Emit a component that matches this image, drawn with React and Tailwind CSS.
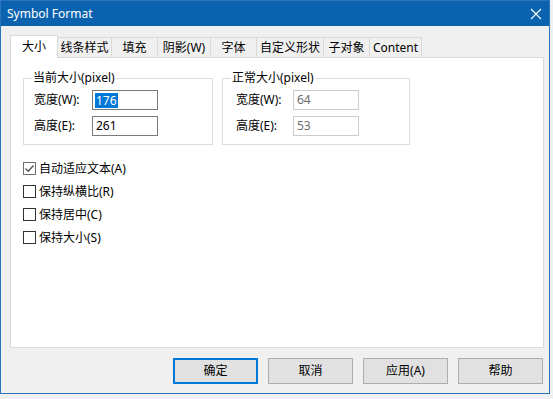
const font = { fontFamily: '"Noto Sans", "Noto Sans CJK SC", sans-serif' }

const tabs = [
  { label: '大小', w: 'w-[48px]', active: true },
  { label: '线条样式', w: 'w-[54px]' },
  { label: '填充', w: 'w-[46px]' },
  { label: '阴影(W)', w: 'w-[53px]' },
  { label: '字体', w: 'w-[46px]' },
  { label: '自定义形状', w: 'w-[67px]' },
  { label: '子对象', w: 'w-[46px]' },
  { label: 'Content', w: 'w-[52px]' },
]

function Tab({ tab }) {
  if (tab.active) {
    return (
      <div
        className={`relative z-10 -mb-px flex h-[23px] ${tab.w} items-center justify-center border border-b-0 border-[#d9d9d9] bg-white text-[12px] text-black`}
      >
        {tab.label}
      </div>
    )
  }
  return (
    <div
      className={`flex h-[20px] ${tab.w} items-center justify-center border-t border-r border-[#d9d9d9] bg-[#f0f0f0] text-[12px] text-black`}
    >
      {tab.label}
    </div>
  )
}

function Field({ label, value, disabled, selected, labelW }) {
  return (
    <div className="flex h-[20px] items-center">
      <span className={`${labelW} text-[12px] text-black`}>{label}</span>
      <div
        className={`flex h-[20px] w-[66px] items-center border bg-white pl-[2px] text-[12px] ${
          disabled ? 'border-[#cccccc] text-[#6d6d6d]' : 'border-[#7a7a7a] text-black'
        }`}
      >
        {selected ? (
          <span className="bg-[#0078d7] px-px leading-[15px] text-white">{value}</span>
        ) : (
          <span className="px-px">{value}</span>
        )}
      </div>
    </div>
  )
}

function Group({ title, className, labelW, children }) {
  return (
    <div className={`relative h-[67px] border border-[#dcdcdc] ${className}`}>
      <span className="absolute -top-[9px] left-[8px] bg-white px-px text-[12px] leading-[16px] text-black">
        {title}
      </span>
      <div className="flex flex-col gap-[6px] pt-[11px]">{children}</div>
    </div>
  )
}

function Check({ label, checked }) {
  return (
    <div className="flex h-[23px] items-center gap-[3px]">
      <div
        className={`flex h-[13px] w-[13px] items-center justify-center border bg-white ${
          checked ? 'border-[#6f6f6f]' : 'border-[#333333]'
        }`}
      >
        {checked && (
          <svg width="11" height="11" viewBox="0 0 11 11">
            <path d="M1.5 5.5 L4.2 8.2 L9.5 2.5" fill="none" stroke="#505050" strokeWidth="1.3" />
          </svg>
        )}
      </div>
      <span className="text-[12px] text-black">{label}</span>
    </div>
  )
}

function Button({ label, primary }) {
  return (
    <div
      className={`flex h-[26px] w-[85px] items-center justify-center bg-[#e1e1e1] text-[12px] text-black ${
        primary ? 'border-2 border-[#0078d7]' : 'border border-[#adadad]'
      }`}
    >
      {label}
    </div>
  )
}

export default function App() {
  return (
    <div className="h-[399px] w-[553px] overflow-hidden bg-[#eef0f2]" style={font}>
      <div className="flex h-[394px] w-[550px] flex-col border border-[#2a74ba] bg-[#f0f0f0]">
        <div className="flex h-[25px] items-center justify-between bg-[#0b63b0] pl-[6px] pr-[7px]">
          <span className="text-[12px] text-white">Symbol Format</span>
          <svg width="12" height="12" viewBox="0 0 12 12">
            <path d="M1 1 L11 11 M11 1 L1 11" stroke="white" strokeWidth="1.1" />
          </svg>
        </div>

        <div className="pl-[9px] pt-[9px]">
          <div className="flex h-[22px] items-end">
            {tabs.map((t) => (
              <Tab key={t.label} tab={t} />
            ))}
          </div>

          <div className="h-[291px] w-[534px] border border-[#d9d9d9] bg-white">
            <div className="ml-[12px] mt-[20px] flex">
              <Group title="当前大小(pixel)" className="w-[190px] pl-[10px]">
                <Field label="宽度(W):" value="176" selected labelW="w-[58px]" />
                <Field label="高度(E):" value="261" labelW="w-[58px]" />
              </Group>
              <Group title="正常大小(pixel)" className="ml-[9px] w-[188px] pl-[13px]">
                <Field label="宽度(W):" value="64" disabled labelW="w-[57px]" />
                <Field label="高度(E):" value="53" disabled labelW="w-[57px]" />
              </Group>
            </div>

            <div className="ml-[12px] mt-[12px] flex flex-col">
              <Check label="自动适应文本(A)" checked />
              <Check label="保持纵横比(R)" />
              <Check label="保持居中(C)" />
              <Check label="保持大小(S)" />
            </div>
          </div>

          <div className="mt-[10px] flex w-[533px] justify-end gap-[10px]">
            <Button label="确定" primary />
            <Button label="取消" />
            <Button label="应用(A)" />
            <Button label="帮助" />
          </div>
        </div>
      </div>
    </div>
  )
}
